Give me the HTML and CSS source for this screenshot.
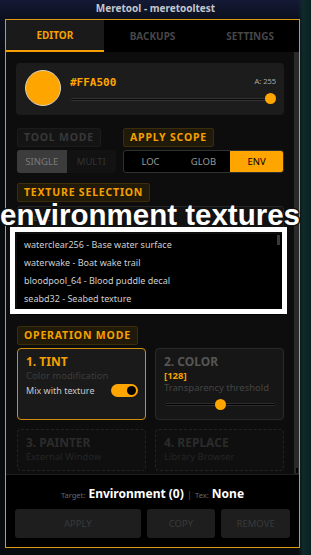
FILE: index.html
```html
<!DOCTYPE html>
<html lang="en">
<head>
    <meta charset="UTF-8">
    <meta name="viewport" content="width=device-width, initial-scale=1.0">
    <title>Meretool - meretooltest</title>
    <link rel="stylesheet" href="styles.css">
</head>
<body>

<div class="titlebar">Meretool - meretooltest</div>

<div class="window">
    <div class="tabs">
        <div class="tab active">EDITOR</div>
        <div class="tab">BACKUPS</div>
        <div class="tab">SETTINGS</div>
    </div>

    <div class="main">
        <div class="content">
            <div class="color-card">
                <div class="swatch"></div>
                <div class="color-info">
                    <div class="color-head">
                        <span class="hex">#FFA500</span>
                        <span class="alpha">A: 255</span>
                    </div>
                    <div class="slider">
                        <div class="thumb" style="left: 100%;"></div>
                    </div>
                </div>
            </div>

            <div class="mode-row">
                <div class="mode-col">
                    <div class="label off">TOOL MODE</div>
                    <div class="seg">
                        <div class="seg-item on">SINGLE</div>
                        <div class="seg-item">MULTI</div>
                    </div>
                </div>
                <div class="mode-col">
                    <div class="label">APPLY SCOPE</div>
                    <div class="scope">
                        <div class="scope-item">LOC</div>
                        <div class="scope-item">GLOB</div>
                        <div class="scope-item on">ENV</div>
                    </div>
                </div>
            </div>

            <div class="label">TEXTURE SELECTION</div>
            <input class="search" type="text" placeholder="Search...">
            <div class="tex-list">
                <div class="tex-item">waterclear256 - Base water surface</div>
                <div class="tex-item">waterwake - Boat wake trail</div>
                <div class="tex-item">bloodpool_64 - Blood puddle decal</div>
                <div class="tex-item">seabd32 - Seabed texture</div>
                <div class="list-bar"></div>
            </div>

            <div class="label">OPERATION MODE</div>
            <div class="ops">
                <div class="op active">
                    <div class="op-title">1. TINT</div>
                    <div class="op-desc">Color modification</div>
                    <div class="op-row">
                        <span>Mix with texture</span>
                        <div class="toggle"><div class="knob"></div></div>
                    </div>
                </div>
                <div class="op">
                    <div class="op-title">2. COLOR</div>
                    <div class="op-value">[128]</div>
                    <div class="op-desc2">Transparency threshold</div>
                    <div class="slider small">
                        <div class="thumb" style="left: 50%;"></div>
                    </div>
                </div>
                <div class="op locked">
                    <div class="op-title">3. PAINTER</div>
                    <div class="op-desc">External Window</div>
                </div>
                <div class="op locked">
                    <div class="op-title">4. REPLACE</div>
                    <div class="op-desc">Library Browser</div>
                </div>
            </div>
        </div>
        <div class="scrollbar"></div>
    </div>

    <div class="footer">
        <div class="status">
            <span class="small">Target:</span> <b>Environment (0)</b> <span class="sep">|</span> <span class="small">Tex:</span> <b>None</b>
        </div>
        <div class="actions">
            <button class="btn wide">APPLY</button>
            <button class="btn">COPY</button>
            <button class="btn">REMOVE</button>
        </div>
    </div>
</div>

<!-- annotation drawn over the screenshot -->
<div class="note">environment textures</div>
<div class="note-box"></div>

</body>
</html>
```

FILE: styles.css
```css
body {
    margin: 0;
    width: 311px;
    height: 555px;
    overflow: hidden;
    position: relative;
    font-family: "Noto Sans", sans-serif;
    background:
        linear-gradient(90deg, rgba(0, 0, 0, 0) 0, rgba(0, 0, 0, 0) 298px, #0f2a2a 303px, #0b2121 311px),
        linear-gradient(180deg, #141a36 0, #0c1020 18px, #080c0e 60px);
}
.titlebar {
    height: 19px;
    line-height: 16px;
    text-align: center;
    color: #c3c6cc;
    font-size: 10px;
    font-weight: bold;
}
.window {
    margin-left: 5px;
    width: 295px;
    height: 529px;
    box-sizing: border-box;
    border: 1px solid #dc9a12;
    background: #000;
    display: flex;
    flex-direction: column;
}
.tabs {
    display: flex;
    height: 32px;
}
.tab {
    flex: 1;
    text-align: center;
    line-height: 32px;
    font-size: 10px;
    font-weight: bold;
    color: #474747;
}
.tab.active {
    background: #1a1a1a;
    color: #f5a000;
    box-sizing: border-box;
    border-bottom: 2px solid #f5a000;
    line-height: 31px;
}
.main {
    display: flex;
    height: 422px;
    background: #0d0d0d;
}
.content {
    flex: 1;
    padding: 11px 10px 0 11px;
}
.scrollbar {
    width: 5px;
    background: #2a2a2a;
    position: relative;
}
.scrollbar::after {
    content: "";
    position: absolute;
    left: 2px;
    bottom: 1px;
    width: 2px;
    height: 5px;
    background: #000;
}

/* color picker card */
.color-card {
    margin-left: -1px;
    height: 52px;
    box-sizing: border-box;
    background: #1c1c1c;
    border-radius: 4px;
    display: flex;
    align-items: center;
    padding: 0 8px 0 9px;
}
.swatch {
    width: 34px;
    height: 34px;
    border-radius: 50%;
    background: #FFA500;
    border: 1px solid #d8d2c4;
    margin-right: 9px;
    margin-top: -2px;
}
.color-info {
    flex: 1;
    margin-top: 2px;
}
.color-head {
    display: flex;
    justify-content: space-between;
    align-items: center;
    height: 14px;
}
.hex {
    font-family: "DejaVu Sans Mono", monospace;
    font-weight: bold;
    font-size: 11px;
    color: #FFA500;
}
.alpha {
    font-size: 7.5px;
    color: #a8a8a8;
    margin-top: -2px;
}
.slider {
    position: relative;
    height: 12px;
    margin-top: 4px;
}
.slider::before {
    content: "";
    position: absolute;
    left: 0;
    right: 0;
    top: 5px;
    height: 1px;
    background: #0a0a0a;
    border: 1px solid #333;
    border-radius: 2px;
}
.thumb {
    position: absolute;
    top: 0;
    width: 11px;
    height: 11px;
    margin-left: -11px;
    border-radius: 50%;
    background: #FFA500;
}
.slider.small .thumb {
    margin-left: -6px;
}

/* section labels */
.label {
    display: inline-block;
    height: 19px;
    box-sizing: border-box;
    padding: 0 6px;
    line-height: 17px;
    font-size: 10.5px;
    font-weight: bold;
    letter-spacing: 0.8px;
    color: #f5a000;
    background: #221a08;
    border: 1px solid #3b2c0c;
    border-radius: 2px;
}
.label.off {
    color: #383838;
    background: #141414;
    border-color: #1b1b1b;
}

.mode-row {
    display: grid;
    grid-template-columns: 99px 1fr;
    gap: 7px;
    margin-top: 9px;
}
.mode-col .label {
    margin-bottom: 3px;
}
.seg {
    display: flex;
    height: 23px;
    border-radius: 3px;
    overflow: hidden;
    background: #121212;
}
.seg-item {
    flex: 1;
    text-align: center;
    line-height: 23px;
    font-size: 9.5px;
    color: #333;
}
.seg-item.on {
    background: #3c3c3c;
    color: #7a7a7a;
}
.scope {
    display: flex;
    height: 23px;
    box-sizing: border-box;
    border: 1px solid #303030;
    border-radius: 3px;
    overflow: hidden;
    background: #000;
}
.scope-item {
    flex: 1;
    text-align: center;
    line-height: 21px;
    font-size: 9.5px;
    color: #9a9a9a;
}
.scope-item.on {
    background: #FFA500;
    color: #000;
}

.content > .label {
    margin-top: 10px;
}
.search {
    display: block;
    width: 100%;
    height: 23px;
    box-sizing: border-box;
    margin-top: 4px;
    padding: 0 10px;
    background: #121212;
    border: 1px solid #262626;
    border-radius: 3px;
    color: #ccc;
    font-family: "Noto Sans", sans-serif;
    font-size: 9px;
}
.search::placeholder {
    color: #4a4a4a;
}
.tex-list {
    position: relative;
    margin-top: 5px;
    height: 81px;
    box-sizing: border-box;
    padding-top: 2px;
    background: #000;
}
.tex-item {
    height: 18px;
    line-height: 18px;
    padding-left: 7px;
    font-size: 9px;
    color: #cfcfcf;
}
.list-bar {
    position: absolute;
    right: 4px;
    top: 1px;
    width: 3px;
    height: 10px;
    background: #3a3a3a;
}

/* operation mode cards */
.content > .label + .ops {
    margin-top: 3px;
}
.content > .tex-list + .label {
    margin-top: 11px;
}
.ops {
    display: grid;
    grid-template-columns: 1fr 1fr;
    grid-template-rows: 72px 42px;
    gap: 9px;
}
.op {
    box-sizing: border-box;
    border: 1px solid #2a2a2a;
    border-radius: 4px;
    background: #161616;
    padding: 5px 7px 0 8px;
}
.op.active {
    border-color: #d08e0c;
    background: #1a1a1a;
}
.op.locked {
    border: 1px dashed #232323;
    background: #0f0f0f;
    padding-top: 5px;
}
.op-title {
    font-size: 12px;
    font-weight: bold;
    line-height: 16px;
    color: #555;
}
.op.active .op-title {
    color: #f5a000;
}
.op.locked .op-title {
    color: #2b2b2b;
}
.op-desc {
    font-size: 9.5px;
    line-height: 11px;
    color: #3c3c3c;
}
.op.locked .op-desc {
    color: #252525;
    line-height: 12px;
}
.op-row {
    display: flex;
    justify-content: space-between;
    align-items: center;
    margin-top: 3px;
    height: 13px;
    font-size: 9px;
    color: #c8c8c8;
}
.toggle {
    position: relative;
    width: 27px;
    height: 13px;
    border-radius: 7px;
    background: #FFA500;
}
.knob {
    position: absolute;
    right: 2px;
    top: 2px;
    width: 9px;
    height: 9px;
    border-radius: 50%;
    background: #000;
}
.op-value {
    font-size: 9.5px;
    font-weight: bold;
    line-height: 11px;
    color: #f5a000;
}
.op-desc2 {
    margin-top: 1px;
    font-size: 9.5px;
    line-height: 12px;
    color: #444;
}
.slider.small {
    margin: 5px 0 0 1px;
    height: 11px;
}
.slider.small::before {
    top: 4px;
    background: #000;
    border-color: #2e2e2e;
}

/* footer */
.footer {
    flex: 1;
    border-top: 1px solid #1e1e1e;
    padding: 11px 9px 0 9px;
}
.status {
    text-align: center;
    height: 16px;
    line-height: 16px;
    color: #fff;
    font-size: 12px;
}
.status .small {
    font-size: 7.5px;
    color: #6a6a6a;
}
.status .sep {
    color: #555;
    font-size: 9px;
}
.actions {
    display: flex;
    gap: 6px;
    margin-top: 7px;
}
.btn {
    flex: 1;
    height: 29px;
    border: none;
    border-radius: 3px;
    background: #1e1e1e;
    color: #3a3a3a;
    font-family: "Noto Sans", sans-serif;
    font-size: 9.5px;
}
.btn.wide {
    flex: 2;
}

/* annotation layer */
.note {
    position: absolute;
    left: 0;
    top: 200px;
    font-family: "Liberation Sans", Arial, sans-serif;
    font-weight: bold;
    font-size: 29.5px;
    line-height: 29px;
    color: #fff;
    text-shadow: -1px -1px 0 #111, 1px -1px 0 #111, -1px 1px 0 #111, 1px 1px 0 #111, 0 1px 0 #111, 0 -1px 0 #111, 1px 0 0 #111, -1px 0 0 #111;
    white-space: nowrap;
}
.note-box {
    position: absolute;
    left: 10px;
    top: 227px;
    width: 277px;
    height: 87px;
    box-sizing: border-box;
    border: 5px solid #fff;
}
```
